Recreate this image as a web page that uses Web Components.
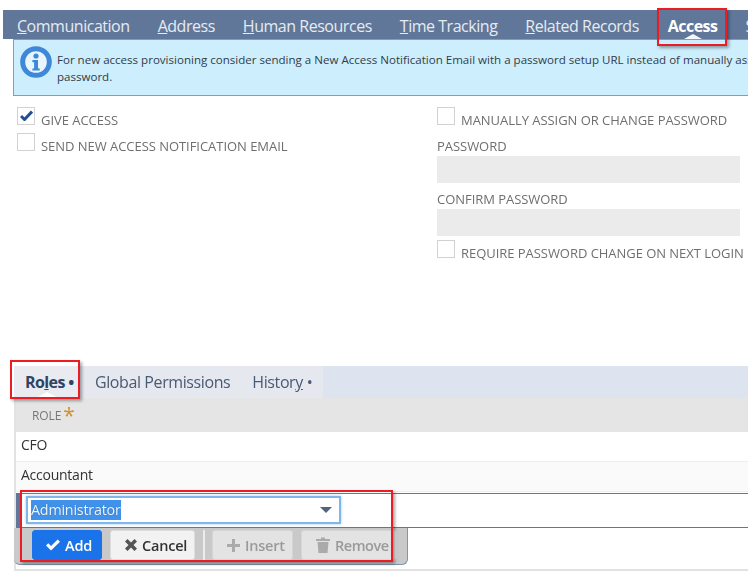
<!DOCTYPE html>
<html><head><meta charset="utf-8"><style>
html,body{margin:0;padding:0;background:#fff}
body{width:748px;height:575px;overflow:hidden;position:relative;font-family:"Open Sans","Noto Sans",sans-serif}
</style></head><body>
<access-page></access-page>
<script>
function def(name, css, html){
  customElements.define(name, class extends HTMLElement{
    constructor(){super();const r=this.attachShadow({mode:'open'});r.innerHTML='<style>'+css+'</style>'+html;}
  });
}
def('top-tab',`:host{display:block;font-size:16px;letter-spacing:-.47px;color:#e6ebf2;line-height:33px;height:29px;position:relative;white-space:nowrap}
:host([active]){color:#fff;font-weight:700;letter-spacing:-.55px;margin-left:1px}
:host([active])::after{content:"";position:absolute;left:50%;margin-left:-9px;bottom:0;border:solid transparent;border-width:0 9px 5px;border-bottom-color:#f4f8fc}`,`<slot></slot>`);
def('top-tabs',`:host{display:flex;height:29px;margin:10px 0 0 3px;background:#607799;padding-left:14px;gap:28px;overflow:hidden}`,`<slot></slot>`);
def('info-banner',`:host{display:flex;box-sizing:border-box;height:57px;margin-left:13px;background:#cdeefc;border:1px solid #6f9fdf;border-right:0;padding:4px 0 0 6px;gap:5px;color:#333c4a;font-size:11.55px;line-height:17px;overflow:hidden}
svg{flex:none;width:32px;height:32px;margin-top:2px}
div{flex:none;padding-top:6.5px;white-space:nowrap}`,`<svg viewBox="0 0 32 32"><circle cx="16" cy="16" r="13.300" fill="#e9f5fc" stroke="#3f88d8" stroke-width="5"/><circle cx="16" cy="10" r="2.600" fill="#3f88d8"/><path d="M12.400 14h5.600v8.400h1.700v2.200h-7.300v-2.200h1.700v-6.200h-1.700z" fill="#3f88d8"/></svg><div><slot></slot></div>`);
def('check-field',`:host{display:flex;align-items:flex-start;gap:6px;font-size:13px;letter-spacing:-.04px;color:#6f6f6f;line-height:18px;height:18px;white-space:nowrap}
i{box-sizing:border-box;flex:none;width:18px;height:18px;border:1px solid #d2d2d2;background:#fff;position:relative;top:-4px}
svg{display:none;position:absolute;left:2px;top:2px;width:13px;height:11px}
:host([checked]) svg{display:block}`,`<i><svg viewBox="0 0 13 11"><path d="M1 6l3.500 3.500L12 1.500" fill="none" stroke="#24508f" stroke-width="3"/></svg></i><span><slot></slot></span>`);
def('text-field',`:host{display:block;font-size:13px;letter-spacing:-.04px;color:#6f6f6f;line-height:18px;white-space:nowrap}
b{display:block;font-weight:400;height:18px}
i{display:block;width:303px;height:27px;background:#ebebeb;margin-top:1px}`,`<b><slot></slot></b><i></i>`);
def('form-cols',`:host{display:flex;height:270px;padding:15px 0 0 17px;box-sizing:border-box}
div{display:flex;flex-direction:column;gap:8px}
.l{width:420px}`,`<div class="l"><slot name="left"></slot></div><div class="r"><slot name="right"></slot></div>`);
def('sub-tabs',`:host{display:flex;height:32px;margin-left:14px;background:#dde4f0;font-size:16px;letter-spacing:-.4px;color:#4a5a72;line-height:32px}
div{display:flex;background:#e5e8ef;width:309px}`,`<div><slot></slot></div>`);
def('sub-tab',`:host{display:block;padding:0 0 0 16px;position:relative;white-space:nowrap}
:host([active]){color:#2f4464;font-weight:700;letter-spacing:-.6px;padding-left:11px;background:#e9ebf0;width:54px}
:host([active])::after{content:"";position:absolute;left:22px;bottom:0;border:solid transparent;border-width:0 11px 6px;border-bottom-color:#fff}`,`<slot></slot>`);
def('role-table',`:host{display:block;margin-left:14px;border-left:2px solid #e2e2e2;height:173px;border-bottom:2px solid #e2e2e2;box-sizing:border-box}`,`<slot></slot>`);
def('table-head',`:host{display:block;height:34px;background:#e5e5e5;padding-left:16px;font-size:12px;color:#777;line-height:36px;box-sizing:border-box;letter-spacing:-.1px}
b{color:#cf8f2e;font-size:21px;font-weight:400;line-height:0;position:relative;top:3px;margin-left:2px}`,`<slot></slot><b>*</b>`);
def('table-row',`:host{display:block;height:30px;padding-left:5px;font-size:14px;color:#333;line-height:25px;border-bottom:1px solid #eee;box-sizing:border-box;letter-spacing:-.25px}
:host([alt]){background:#fafafa}`,`<slot></slot>`);
def('edit-row',`:host{display:block;height:35px;box-sizing:border-box;border-top:1px solid #607799;border-bottom:1px solid #607799;border-left:6px solid #607799;padding:2px 0 0 4px;margin-top:1px;position:relative}`,`<slot></slot>`);
def('select-box',`:host{display:block;box-sizing:border-box;width:315px;height:28px;background:#fff;border:2px solid #7fb6ec;box-shadow:0 0 3px #a9cdf0;position:relative;font-size:14.3px;line-height:22px;padding:1px 0 0 3px;letter-spacing:-.2px;color:#f0f6fd}
span{background:#3f91ea;display:inline-block;height:20px;line-height:20px;text-shadow:0 0 1px #2a5a9a}
i{position:absolute;right:7px;top:9px;border:solid transparent;border-width:6px 6.500px 0;border-top-color:#52657f}`,`<span><slot></slot></span><i></i>`);
def('action-bar',`:host{display:flex;align-items:flex-start;gap:8px;box-sizing:border-box;width:394px;height:37px;margin-left:-2px;padding:2px 0 0 18px;background:#c9c9c9;border-radius:0 0 6px 6px;border-bottom:1px solid #8193ad;border-right:1px solid #8193ad}`,`<slot></slot>`);
def('action-btn',`:host{display:flex;align-items:center;gap:5px;box-sizing:border-box;height:30px;padding-left:14px;border-radius:3px;background:#f2f2f2;color:#333;font-size:14.5px;font-weight:600;border:1px solid #ddd;letter-spacing:-.2px}
:host([primary]){background:#1a73e8;color:#fff;border-color:#1a73e8;padding-left:13px}
:host([disabled]){background:#e3e3e3;color:#9a9a9a;border-color:#d5d5d5}`,`<slot name="i"></slot><slot></slot>`);
def('sep-line',`:host{display:block;width:2px;height:30px;background:#ececec;margin-right:-1px}`,``);
def('red-mark',`:host{display:block;position:absolute;box-sizing:border-box;border:2px solid #ec1c24;box-shadow:2px 2px 3px rgba(0,0,0,.35);pointer-events:none}`,``);
def('access-page',`:host{display:block;position:relative;width:748px;height:575px;overflow:hidden;filter:blur(.3px)}`,`
<top-tabs>
<top-tab><u>C</u>ommunication</top-tab><top-tab><u>A</u>ddress</top-tab><top-tab><u>H</u>uman Resources</top-tab><top-tab><u>T</u>ime Tracking</top-tab><top-tab><u>R</u>elated Records</top-tab><top-tab active>Access</top-tab><top-tab>S</top-tab>
</top-tabs>
<info-banner>For new access provisioning consider sending a New Access Notification Email with a password setup URL instead of manually assigning a<br>password.</info-banner>
<form-cols>
<check-field slot="left" checked>GIVE ACCESS</check-field>
<check-field slot="left">SEND NEW ACCESS NOTIFICATION EMAIL</check-field>
<check-field slot="right">MANUALLY ASSIGN OR CHANGE PASSWORD</check-field>
<text-field slot="right">PASSWORD</text-field>
<text-field slot="right" style="margin-top:-1px">CONFIRM PASSWORD</text-field>
<check-field slot="right">REQUIRE PASSWORD CHANGE ON NEXT LOGIN</check-field>
</form-cols>
<sub-tabs>
<sub-tab active>Ro<u>l</u>es •</sub-tab><sub-tab>Global Permissions</sub-tab><sub-tab style="padding-left:22px">Histor<u>y</u> •</sub-tab>
</sub-tabs>
<role-table>
<table-head>ROLE</table-head>
<table-row>CFO</table-row>
<table-row alt>Accountant</table-row>
<edit-row><select-box>Administrator</select-box></edit-row>
<action-bar>
<action-btn primary style="width:70px"><svg slot="i" viewBox="0 0 14 14" width="14" height="14"><path d="M0 7.500l2.300-2.300 2.700 2.700L11.700 1.500 14 3.800 5 12.500z" fill="#fff"/></svg>Add</action-btn>
<action-btn style="width:85px"><svg slot="i" viewBox="0 0 12 12" width="12" height="12"><path d="M0 2.500L2.500 0 6 3.500 9.500 0 12 2.500 8.500 6 12 9.500 9.500 12 6 8.500 2.500 12 0 9.500 3.500 6z" fill="#555"/></svg>Cancel</action-btn>
<sep-line></sep-line>
<action-btn disabled style="width:81px"><svg slot="i" viewBox="0 0 13 13" width="13" height="13"><path d="M5 0h3v5h5v3H8v5H5V8H0V5h5z" fill="#aaa"/></svg>Insert</action-btn>
<action-btn disabled style="width:96px;letter-spacing:-.45px"><svg slot="i" viewBox="0 0 14 16" width="14" height="16"><path d="M0 2h5V.5h4V2h5v2H0zM1.500 5h11l-1 11h-9z" fill="#aaa"/></svg>Remove</action-btn>
</action-bar>
</role-table>
<red-mark style="left:657px;top:8px;width:70px;height:38px"></red-mark>
<red-mark style="left:10px;top:360px;width:70px;height:39px"></red-mark>
<red-mark style="left:20px;top:490px;width:373px;height:72px"></red-mark>
`);
</script>
</body></html>
